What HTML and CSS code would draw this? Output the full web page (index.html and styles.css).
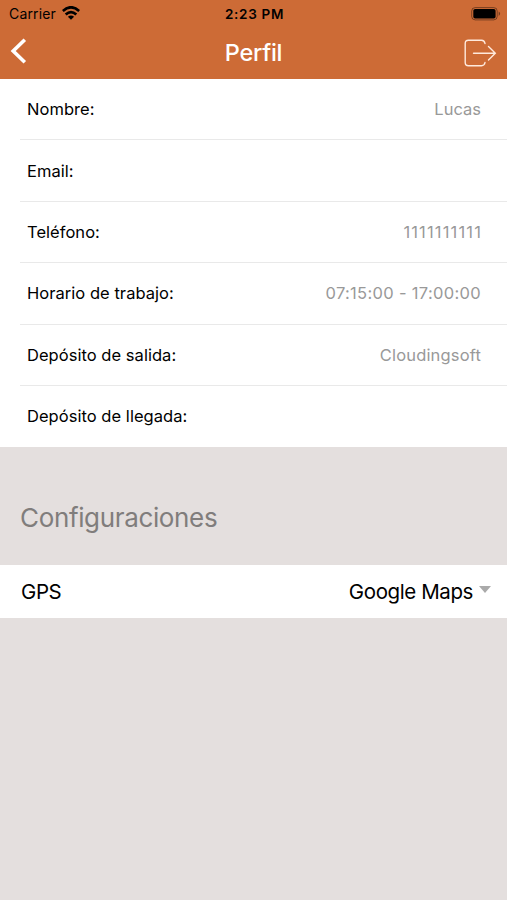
FILE: index.html
```html
<!DOCTYPE html>
<html lang="es">
<head>
<meta charset="utf-8">
<title>Perfil</title>
<link rel="stylesheet" href="styles.css">
</head>
<body>
<header class="header">
  <div class="status">
    <div class="carrier"><span class="carrier-name">Carrier</span>
      <svg class="wifi" width="18" height="14" viewBox="0 0 18 14" fill="none" stroke="#000" stroke-width="2.7"><path d="M.8 5Q9-2.4 17.2 5M3.7 8.5Q9 3.7 14.3 8.5"/><path d="M9 13.8L5.9 10.7Q9 8.2 12.1 10.7Z" fill="#000" stroke="none"/></svg>
    </div>
    <span class="time">2:23 PM</span>
    <svg class="battery" width="30" height="14" viewBox="0 0 30 14"><rect x=".7" y=".6" width="25.5" height="12.3" rx="3.5" fill="none" stroke="#000" stroke-opacity=".42"/><rect x="2.3" y="2" width="22.3" height="9.5" rx="1.8"/><path d="M27.7 4.5q2.8 2.2 0 4.4z" opacity=".45"/></svg>
  </div>
  <nav class="nav">
    <svg class="back" width="18" height="28" viewBox="0 0 18 28" fill="none" stroke="#fff" stroke-width="3.6"><path d="M14.8 2.7L3.2 14L14.8 25.3"/></svg>
    <h1 class="title">Perfil</h1>
    <svg class="logout" width="34" height="30" viewBox="0 0 34 30" fill="none" stroke="#ffe9dc" stroke-width="1.4" stroke-linecap="round"><path d="M22 5.5Q21.5 2.3 18.5 2.3H5.5Q2.2 2.3 2.2 5.5V24.5Q2.2 27.7 5.5 27.7H18.5Q21.5 27.7 22 24.5M10.5 15.2H32M25.5 8.5L32.3 15.2L25.5 22"/></svg>
  </nav>
</header>
<main>
  <dl class="profile">
    <div class="row"><dt>Nombre:</dt><dd>Lucas</dd></div>
    <div class="row"><dt>Email:</dt><dd></dd></div>
    <div class="row"><dt>Teléfono:</dt><dd class="phone">1111111111</dd></div>
    <div class="row"><dt>Horario de trabajo:</dt><dd class="hours">07:15:00 - 17:00:00</dd></div>
    <div class="row"><dt>Depósito de salida:</dt><dd class="depot">Cloudingsoft</dd></div>
    <div class="row"><dt>Depósito de llegada:</dt><dd></dd></div>
  </dl>
  <h2 class="section-title">Configuraciones</h2>
  <div class="setting"><span>GPS</span><span class="choice">Google Maps<i class="caret"></i></span></div>
</main>
</body>
</html>
```
FILE: styles.css
```css
* { box-sizing: border-box; }
body { margin: 0; min-height: 900px; background: #e4dfde; font-family: Inter, sans-serif; color: #000; }
.header { height: 79px; background: #cd6b36; }
.status { height: 27px; display: grid; grid-template-columns: 1fr auto 1fr; align-items: center; padding: 0 6px 0 9px; font-size: 14px; }
.carrier { display: flex; align-items: center; gap: 6px; }
.carrier-name { letter-spacing: .15px; }
.wifi { margin-top: -1px; }
.time { font-weight: 600; font-size: 13.5px; letter-spacing: .7px; margin-left: -1px; }
.battery { justify-self: end; }
.nav { height: 52px; display: grid; grid-template-columns: 1fr auto 1fr; align-items: center; padding: 0 10px; }
.back { margin-top: -4px; }
.title { margin: -2px 0 0; color: #fff; font-size: 23.5px; font-weight: 450; letter-spacing: -.25px; }
.logout { justify-self: end; }
.profile { margin: 0; height: 368px; background: #fff; }
.row { height: 61.4px; margin-left: 20px; padding: 0 26px 0 7px; display: flex; align-items: center; justify-content: space-between; font-size: 16.5px; border-bottom: 1px solid #e9e9e9; }
.row:last-child { border: 0; padding-bottom: 1px; }
dt { letter-spacing: .04px; }
dd { margin: 0; color: #999; }
.phone { letter-spacing: 1.15px; margin-right: -1px; }
.hours { letter-spacing: .32px; }
.depot { letter-spacing: .17px; }
.section-title { margin: 0; height: 118px; padding: 53px 20px 0; font-size: 26px; line-height: 36px; font-weight: 400; letter-spacing: -.35px; color: #807d7c; }
.setting { height: 53px; background: #fff; display: flex; align-items: center; justify-content: space-between; padding: 0 16px 0 21px; font-size: 20.5px; letter-spacing: -.4px; }
.choice { display: flex; align-items: center; gap: 6px; }
.caret { border: 6px solid transparent; border-top: 7px solid #aaa; border-bottom: 0; margin-top: -5px; }
```
